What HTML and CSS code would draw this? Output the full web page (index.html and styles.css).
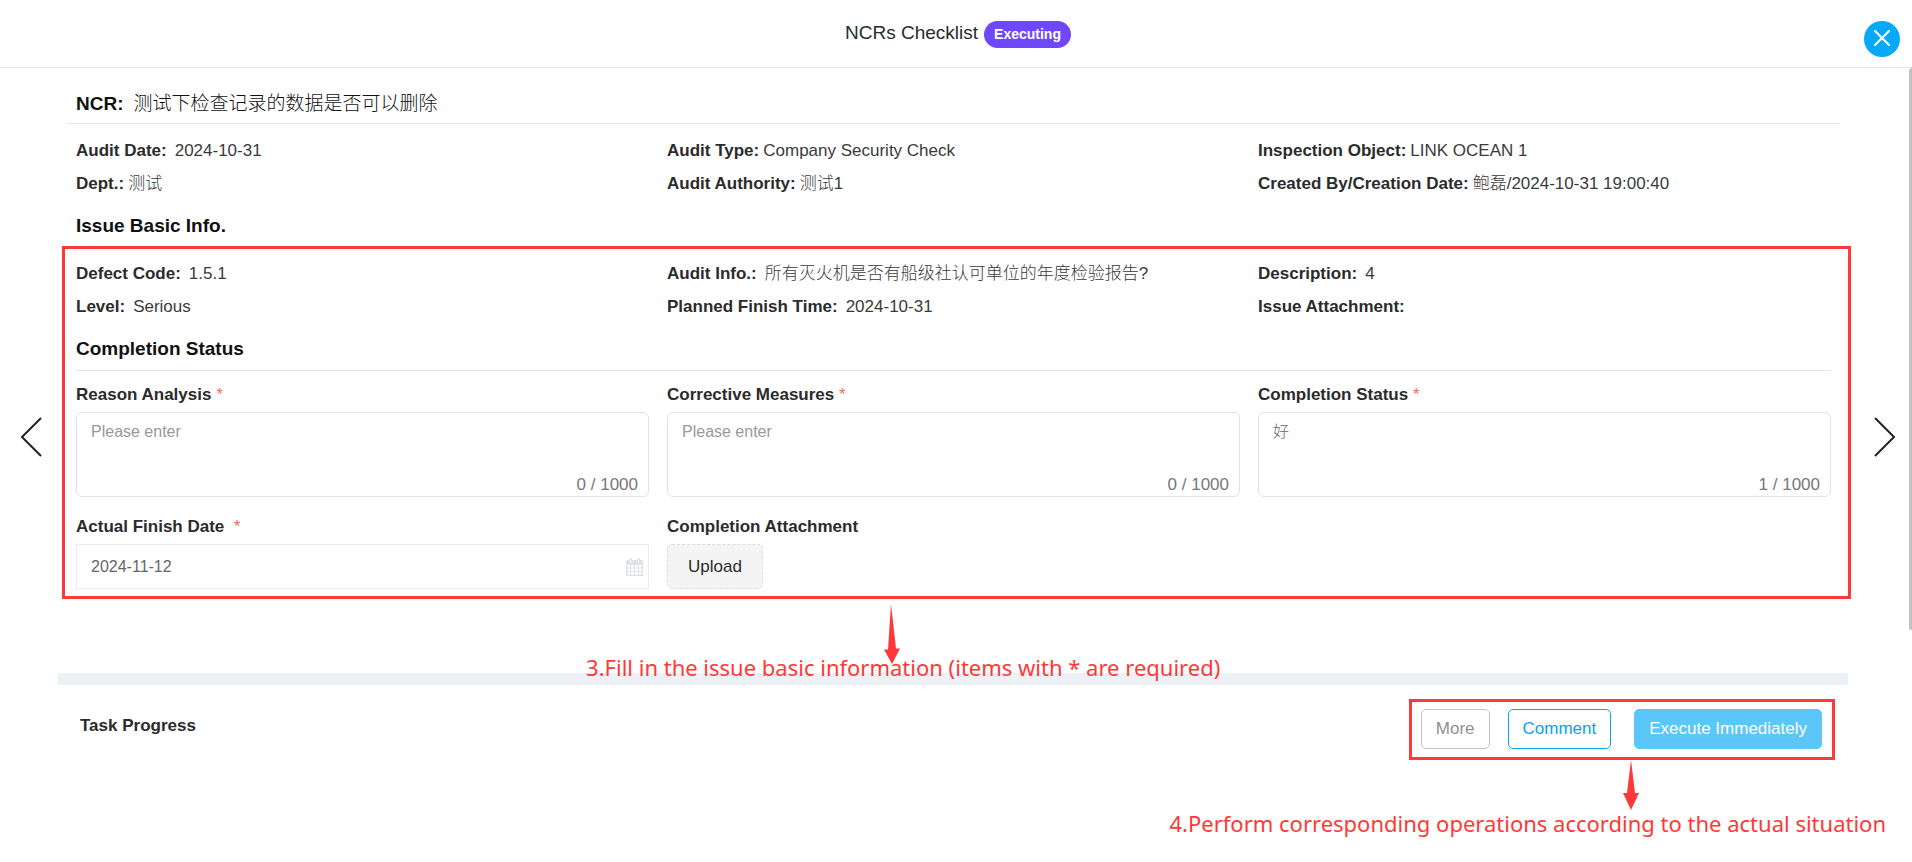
FILE: index.html
```html
<!DOCTYPE html>
<html lang="en">
<head>
<meta charset="utf-8">
<meta name="viewport" content="width=device-width, initial-scale=1">
<title>NCRs Checklist</title>
<link rel="stylesheet" href="styles.css">
</head>
<body>
<header class="header">
  <h1 class="title">NCRs Checklist</h1>
  <span class="badge">Executing</span>
  <button class="close" type="button" aria-label="Close">
    <svg width="18" height="18" viewBox="0 0 18 18" fill="none" stroke="#fff" stroke-width="2" stroke-linecap="round"><path d="M2 1 16 15M16 1 2 15"/></svg>
  </button>
</header>
<main class="main">
  <button class="nav nav-prev" type="button" aria-label="Previous">
    <svg width="22" height="40" viewBox="0 0 22 40" fill="none" stroke="#222" stroke-width="2"><path d="M21 1 2 20 21 39"/></svg>
  </button>
  <button class="nav nav-next" type="button" aria-label="Next">
    <svg width="22" height="40" viewBox="0 0 22 40" fill="none" stroke="#222" stroke-width="2"><path d="M1 1 20 20 1 39"/></svg>
  </button>
  <div class="scrollbar"></div>

  <section class="record">
    <h2 class="record-title"><b>NCR:</b><span>测试下检查记录的数据是否可以删除</span></h2>
    <div class="info">
      <div class="item"><b>Audit Date:</b><span class="far">2024-10-31</span></div>
      <div class="item"><b>Audit Type:</b><span>Company Security Check</span></div>
      <div class="item"><b>Inspection Object:</b><span>LINK OCEAN 1</span></div>
      <div class="item"><b>Dept.:</b><span>测试</span></div>
      <div class="item"><b>Audit Authority:</b><span>测试1</span></div>
      <div class="item"><b>Created By/Creation Date:</b><span>鲍磊/2024-10-31 19:00:40</span></div>
    </div>
    <h2 class="heading heading-issue">Issue Basic Info.</h2>
  </section>

  <section class="issue">
    <div class="info">
      <div class="item"><b>Defect Code:</b><span class="far">1.5.1</span></div>
      <div class="item"><b>Audit Info.:</b><span class="far">所有灭火机是否有船级社认可单位的年度检验报告?</span></div>
      <div class="item"><b>Description:</b><span class="far">4</span></div>
      <div class="item"><b>Level:</b><span class="far">Serious</span></div>
      <div class="item"><b>Planned Finish Time:</b><span class="far">2024-10-31</span></div>
      <div class="item"><b>Issue Attachment:</b></div>
    </div>
    <h2 class="heading heading-status">Completion Status</h2>
    <form class="form">
      <div class="field">
        <label class="label" for="reason">Reason Analysis <i class="req">*</i></label>
        <div class="area"><textarea id="reason" placeholder="Please enter"></textarea><span class="count">0 / 1000</span></div>
      </div>
      <div class="field">
        <label class="label" for="measures">Corrective Measures <i class="req">*</i></label>
        <div class="area"><textarea id="measures" placeholder="Please enter"></textarea><span class="count">0 / 1000</span></div>
      </div>
      <div class="field">
        <label class="label" for="status">Completion Status <i class="req">*</i></label>
        <div class="area"><textarea id="status">好</textarea><span class="count">1 / 1000</span></div>
      </div>
      <div class="field">
        <label class="label" for="finish">Actual Finish Date &nbsp;<i class="req">*</i></label>
        <div class="date">
          <input id="finish" type="text" value="2024-11-12">
          <svg width="17" height="18" viewBox="0 0 17 18"><path fill="#dfe3e8" fill-rule="evenodd" d="M1.5 2H3V1.200Q3 0 4.200 0H4.800Q6 0 6 1.200V2H11V1.200Q11 0 12.200 0H12.800Q14 0 14 1.200V2H15.500Q17 2 17 3.500V16.500Q17 18 15.500 18H1.500Q0 18 0 16.500V3.500Q0 2 1.500 2ZM1.500 7V9.500H4V7ZM5 7V9.500H8V7ZM9 7V9.500H12V7ZM13 7V9.500H15.500V7ZM1.500 10.500V13H4V10.500ZM5 10.500V13H8V10.500ZM9 10.500V13H12V10.500ZM13 10.500V13H15.500V10.500ZM1.500 14V16.500H4V14ZM5 14V16.500H8V14ZM9 14V16.500H12V14ZM13 14V16.500H15.500V14ZM4 1.500V4.500H5V1.500ZM12 1.500V4.500H13V1.500Z"/></svg>
        </div>
      </div>
      <div class="field">
        <label class="label" for="upload">Completion Attachment</label>
        <button class="upload" id="upload" type="button">Upload</button>
      </div>
    </form>
    <div class="note note-fill">
      <svg class="arrow" width="16" height="60" viewBox="0 0 16 60" fill="#ff3838"><path d="M7 0 4 45.500H0L8 60 16 44.500H12Z"/></svg>
      <p class="note-text">3.Fill in the issue basic information (items with * are required)</p>
    </div>
  </section>

  <section class="progress">
    <h2 class="progress-title">Task Progress</h2>
    <div class="actions">
      <button class="btn btn-more" type="button">More</button>
      <button class="btn btn-comment" type="button">Comment</button>
      <button class="btn btn-execute" type="button">Execute Immediately</button>
      <div class="note note-act">
        <svg class="arrow" width="16" height="50" viewBox="0 0 16 50" fill="#ff3838"><path d="M8 0 4 33H0L8 50 16 33H12Z"/></svg>
        <p class="note-text">4.Perform corresponding operations according to the actual situation</p>
      </div>
    </div>
  </section>
</main>
</body>
</html>
```
FILE: styles.css
```css
* {
  box-sizing: border-box;
}

body {
  margin: 0;
  min-height: 100vh;
  background: #fff;
  color: #2b2b2b;
  font: 17px/33px "Liberation Sans", "Noto Sans CJK SC", sans-serif;
  overflow-x: hidden;
}

button,
input,
textarea {
  font: inherit;
  color: inherit;
}

h1,
h2,
p {
  margin: 0;
}

b {
  font-weight: 700;
}

button {
  cursor: pointer;
}

.header {
  position: relative;
  display: flex;
  justify-content: center;
  gap: 6px;
  height: 68px;
  padding: 16px 0 0 4px;
  border-bottom: 1px solid #e3e3e3;
}

.title {
  font-size: 19px;
  font-weight: 400;
  line-height: 33px;
}

.badge {
  align-self: flex-start;
  margin-top: 5px;
  padding: 0 10px;
  border-radius: 14px;
  background: #6f48fb;
  color: #fff;
  font-size: 14px;
  font-weight: 700;
  line-height: 27px;
}

.close {
  position: absolute;
  top: 21px;
  right: 12px;
  display: grid;
  place-items: center;
  width: 36px;
  height: 36px;
  padding: 0;
  border: 0;
  border-radius: 50%;
  background: #05a9f7;
}

.main {
  position: relative;
  padding: 20px 64px 0 58px;
}

.nav {
  position: absolute;
  top: 349px;
  padding: 0;
  border: 0;
  background: none;
  line-height: 0;
}

.nav-prev {
  left: 20px;
}

.nav-next {
  right: 16px;
}

.scrollbar {
  position: absolute;
  top: 0;
  right: 0;
  width: 3px;
  height: 562px;
  border-radius: 3px 0 0 3px;
  background: #c1c1c1;
}

.record-title {
  display: flex;
  gap: 10px;
  margin: 0 8px 10px 9px;
  padding: 0 9px 3px;
  border-bottom: 1px solid #e6e6e6;
  color: #111;
  font-size: 19px;
  font-weight: 300;
  line-height: 32px;
}

.info {
  display: grid;
  grid-template-columns: repeat(3, 1fr);
  column-gap: 18px;
  padding: 0 17px 0 18px;
}

.item {
  font-weight: 300;
}

.item span {
  margin-left: 4px;
  color: #3a3a3a;
}

.item .far {
  margin-left: 8px;
}

.heading {
  color: #111;
  font-size: 19px;
  line-height: 32px;
}

.heading-issue {
  margin: 10px 18px 4px;
}

.issue {
  position: relative;
  margin: 0 -3px 0 4px;
  padding: 8px 17px 7px 11px;
  border: 3px solid #ff3838;
}

.issue .info {
  padding: 0;
}

.heading-status {
  margin-top: 10px;
  padding-bottom: 5px;
  border-bottom: 1px solid #e6e6e6;
}

.form {
  display: grid;
  grid-template-columns: repeat(3, 1fr);
  gap: 14px 18px;
  padding-top: 8px;
}

.label {
  display: block;
  margin-bottom: 1px;
  font-weight: 700;
  line-height: 32px;
}

.req {
  color: #f0705a;
  font-style: normal;
  font-weight: 400;
}

.area {
  position: relative;
  display: flex;
}

.area textarea {
  width: 100%;
  height: 85px;
  padding: 2px 14px;
  border: 1px solid #e2e2e2;
  border-radius: 6px;
  background: #fff;
  color: #666;
  font-size: 16px;
  font-weight: 300;
  resize: none;
}

textarea::placeholder {
  color: #999;
}

.count {
  position: absolute;
  right: 11px;
  bottom: 0;
  color: #777;
  line-height: 25px;
}

.date {
  display: flex;
  align-items: center;
  height: 45px;
  padding-right: 5px;
  border: 1px solid #ececec;
}

.date input {
  flex: 1;
  min-width: 0;
  padding: 0 14px;
  border: 0;
  background: none;
  color: #666;
  font-size: 16px;
}

.upload {
  width: 96px;
  height: 45px;
  padding: 0;
  border: 1px dashed #dedede;
  border-radius: 5px;
  background: #f4f4f4;
}

.note {
  position: absolute;
  display: flex;
  flex-direction: column;
  color: #ff3838;
  pointer-events: none;
}

.note-text {
  font-family: "Noto Sans", "Open Sans", sans-serif;
  font-size: 22px;
  line-height: 30px;
  white-space: nowrap;
}

.note-fill {
  top: calc(100% + 8px);
  left: 29%;
  margin-left: 4px;
}

.note-fill .arrow {
  margin-left: 298px;
}

.note-fill .note-text {
  margin-top: -12px;
}

.progress {
  display: flex;
  justify-content: space-between;
  align-items: flex-start;
  margin-top: 74px;
  padding: 14px 13px 0 22px;
  border-top: 12px solid #edf0f5;
}

.progress-title {
  margin-top: 10px;
  font-size: 17px;
  line-height: 33px;
}

.actions {
  position: relative;
  display: flex;
  padding: 7px 10px 8px 9px;
  border: 3px solid #ff3838;
}

.btn {
  height: 40px;
  padding: 0 14px;
  border: 1px solid;
  border-radius: 5px;
  background: #fff;
  line-height: 38px;
}

.btn-more {
  border-color: #c4c4c4;
  color: #909090;
}

.btn-comment {
  margin: 0 23px 0 18px;
  border-color: #05a9f7;
  color: #05a3ee;
}

.btn-execute {
  border-color: #5bc6f8;
  background: #5bc6f8;
  color: #fff;
}

.note-act {
  top: calc(100% + 3px);
  right: -54px;
}

.note-act .arrow {
  margin-left: 453px;
}

.note-act .note-text {
  margin-top: -2px;
}
```
